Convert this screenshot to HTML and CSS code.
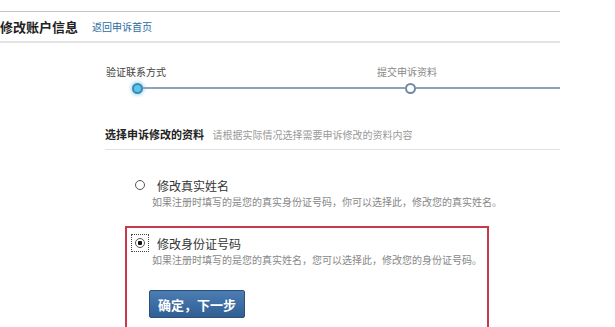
FILE: index.html
```html
<!DOCTYPE html>
<html lang="zh-CN">
<head>
    <meta charset="UTF-8">
    <meta name="viewport" content="width=device-width, initial-scale=1.0">
    <title>修改账户信息</title>
    <link rel="stylesheet" href="styles.css">
</head>
<body>
    <div class="page">
        <div class="top-rule"></div>

        <div class="header">
            <h1>修改账户信息</h1>
            <a href="#" class="back-link">返回申诉首页</a>
        </div>

        <div class="steps">
            <div class="step-labels">
                <span class="step-label active">验证联系方式</span>
                <span class="step-label next">提交申诉资料</span>
            </div>
            <div class="track">
                <span class="dot active"></span>
                <span class="line first"></span>
                <span class="dot"></span>
                <span class="line"></span>
            </div>
        </div>

        <div class="section-title">
            <strong>选择申诉修改的资料</strong>
            <span class="hint">请根据实际情况选择需要申诉修改的资料内容</span>
        </div>

        <form class="options">
            <div class="option">
                <label class="option-row">
                    <span class="radio-wrap"><input type="radio" name="item" value="name"></span>
                    <span class="option-name">修改真实姓名</span>
                </label>
                <p class="option-desc">如果注册时填写的是您的真实身份证号码，你可以选择此，修改您的真实姓名。</p>
            </div>

            <div class="option selected">
                <label class="option-row">
                    <span class="radio-wrap focus"><input type="radio" name="item" value="idcard" checked></span>
                    <span class="option-name">修改身份证号码</span>
                </label>
                <p class="option-desc">如果注册时填写的是您的真实姓名，您可以选择此，修改您的身份证号码。</p>
                <button type="submit" class="next-btn">确定，下一步</button>
            </div>
        </form>
    </div>
</body>
</html>
```

FILE: styles.css
```css
body {
    margin: 0;
    padding: 0;
    background-color: white;
    font-family: "Noto Sans CJK SC", "Noto Sans", sans-serif;
    color: #333;
}

.page {
    width: 560px;
}

.top-rule {
    height: 11px;
    border-bottom: 1px solid #c4c4c4;
}

.header {
    display: flex;
    align-items: center;
    height: 29px;
    border-bottom: 2px solid #e4e4e4;
}

.header h1 {
    margin: 0;
    font-size: 13px;
    font-weight: bold;
    color: #222;
    line-height: 29px;
}

.back-link {
    margin-left: 14px;
    font-size: 10px;
    color: #2a6d9e;
    text-decoration: none;
}

.steps {
    padding-top: 22px;
}

.step-labels {
    display: flex;
    height: 14px;
    line-height: 14px;
    font-size: 10px;
}

.step-label {
    display: block;
}

.step-label.active {
    margin-left: 106px;
    color: #444;
}

.step-label.next {
    margin-left: 211px;
    color: #888;
}

.track {
    display: flex;
    align-items: center;
    height: 10px;
    margin-top: 4px;
    margin-left: 132px;
}

.dot {
    width: 7px;
    height: 7px;
    border: 2px solid #6f89a6;
    border-radius: 50%;
    background-color: white;
    flex-shrink: 0;
}

.dot.active {
    background-color: #5cc6ea;
    border-color: #3f86b0;
    box-shadow: 0 0 3px 2px #bfe6f6;
}

.line {
    flex: 1;
    height: 2px;
    background-color: #8ea3bb;
}

.line.first {
    flex: none;
    width: 262px;
}

.section-title {
    margin: 33px 0 0 105px;
    padding-bottom: 6px;
    border-bottom: 1px solid #e2e2e2;
    line-height: 16px;
    font-size: 11px;
}

.section-title strong {
    color: #222;
}

.hint {
    margin-left: 6px;
    font-size: 10px;
    color: #999;
}

.options {
    width: 364px;
    margin: 18px 0 0 125px;
}

.option {
    padding: 6px 6px 6px 4px;
    border: 2px solid transparent;
    margin-bottom: 10px;
}

.option.selected {
    border-color: #c9384b;
    padding-bottom: 30px;
}

.option-row {
    display: flex;
    align-items: center;
    height: 18px;
}

.radio-wrap {
    display: flex;
    align-items: center;
    justify-content: center;
    width: 16px;
    height: 16px;
    border: 1px dotted transparent;
}

.radio-wrap.focus {
    border-color: #444;
}

.radio-wrap input {
    appearance: none;
    width: 10px;
    height: 10px;
    margin: 0;
    border: 1px solid #555;
    border-radius: 50%;
    background-color: white;
}

.radio-wrap input:checked {
    background: radial-gradient(circle, #111 0 2px, white 2.5px);
}

.option-name {
    margin-left: 8px;
    font-size: 12px;
    color: #333;
}

.option-desc {
    margin: 1px 0 0 21px;
    font-size: 10px;
    line-height: 13px;
    color: #888;
    white-space: nowrap;
}

.next-btn {
    display: block;
    margin: 24px 0 0 18px;
    width: 96px;
    height: 28px;
    border: 1px solid #2b4f7a;
    border-radius: 2px;
    background: linear-gradient(#4c7db3, #2f5e93);
    color: white;
    font-family: inherit;
    font-size: 13px;
    font-weight: bold;
    cursor: pointer;
}
```
